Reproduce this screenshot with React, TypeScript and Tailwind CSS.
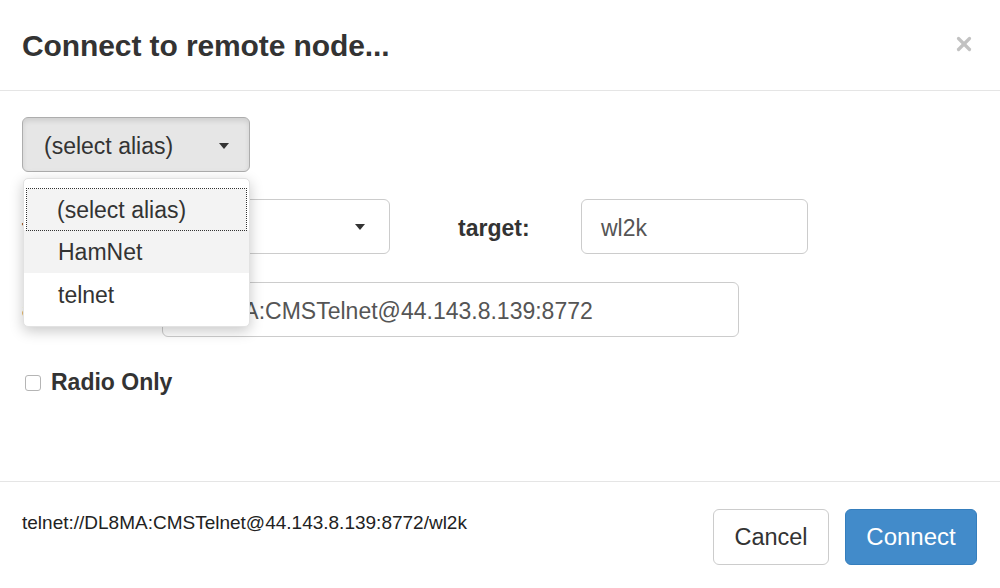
import { X } from 'lucide-react'

const font = "font-['Liberation_Sans','Helvetica_Neue',Arial,sans-serif]"

function Caret() {
  return <span className="inline-block w-0 h-0 border-x-[5px] border-t-[6px] border-x-transparent border-t-[#333]" />
}

function AliasMenu() {
  return (
    <div className="absolute left-[1px] top-[61px] w-[227px] py-[10px] bg-white rounded-[5px] border border-[#e2e2e2] shadow-[0_4px_14px_rgba(0,0,0,0.22)] z-10">
      <div className="mx-[3px] h-[41px] flex items-center pl-[30px] pt-[2px] bg-[#f3f3f3] outline-1 outline-dotted outline-[#333] text-[23px]">(select alias)</div>
      <div className="h-[43px] flex items-center pl-[34px] pt-[2px] bg-[#f3f3f3] text-[23px]">HamNet</div>
      <div className="h-[43px] flex items-center pl-[34px] pt-[2px] text-[23px]">telnet</div>
    </div>
  )
}

export default function App() {
  return (
    <div className={`w-[1000px] h-[588px] bg-white text-[#333] flex flex-col ${font}`}>
      <div className="h-[91px] border-b border-[#e5e5e5] flex items-center justify-between pl-[22px] pr-[25px]">
        <h4 className="text-[30px] font-semibold tracking-[-0.1px] text-[#333]">Connect to remote node...</h4>
        <X size={22} strokeWidth={3.5} className="text-[#c2c2c2] -mt-[2px]" />
      </div>

      <div className="flex-1 px-[22px] pt-[26px]">
        <div className="relative w-[228px]">
          <button className="w-[228px] h-[55px] rounded-[6px] border border-[#adadad] bg-[#e6e6e6] shadow-[inset_0_3px_5px_rgba(0,0,0,0.1)] flex items-center justify-between pl-[21px] pr-[20px] pt-[3px] text-[23px] text-[#333]">
            <span>(select alias)</span>
            <Caret />
          </button>
          <AliasMenu />
        </div>

        <div className="mt-[27px] flex items-center h-[55px]">
          <label className="w-[140px] pt-[4px] text-[23px] font-bold">transport:</label>
          <div className="w-[228px] h-[55px] rounded-[6px] border border-[#ccc] flex items-center justify-between pl-[19px] pr-[24px] text-[23px]">
            <span>telnet</span>
            <Caret />
          </div>
          <label className="ml-[68px] w-[123px] pt-[4px] text-[23px] font-bold">target:</label>
          <div className="w-[227px] h-[55px] rounded-[6px] border border-[#ccc] flex items-center pl-[19px] pt-[3px] text-[23px] text-[#555]">wl2k</div>
        </div>

        <div className="mt-[28px] flex items-center h-[55px]">
          <label className="w-[140px] text-[23px] font-bold">address:</label>
          <div className="w-[577px] h-[55px] rounded-[6px] border border-[#ccc] flex items-center pl-[19px] pt-[3px] text-[23px] text-[#555]">DL8MA:CMSTelnet@44.143.8.139:8772</div>
        </div>

        <div className="mt-[33px] flex items-center h-[26px]">
          <span className="ml-[3px] w-[16px] h-[16px] rounded-[3px] border border-[#b5b5b5] bg-white" />
          <span className="ml-[10px] text-[23px] font-bold -mt-[2px]">Radio Only</span>
        </div>
      </div>

      <div className="h-[107px] border-t border-[#e5e5e5] flex items-start justify-between pl-[22px] pr-[23px] pt-[27px]">
        <span className="text-[19px] text-[#222]">telnet://DL8MA:CMSTelnet@44.143.8.139:8772/wl2k</span>
        <div className="flex gap-[16px]">
          <button className="w-[116px] h-[56px] rounded-[6px] border border-[#ccc] bg-white pt-[2px] text-[23.5px] text-[#333]">Cancel</button>
          <button className="w-[132px] h-[56px] rounded-[6px] border border-[#357ebd] bg-[#428bca] text-[24px] text-white">Connect</button>
        </div>
      </div>
    </div>
  )
}
